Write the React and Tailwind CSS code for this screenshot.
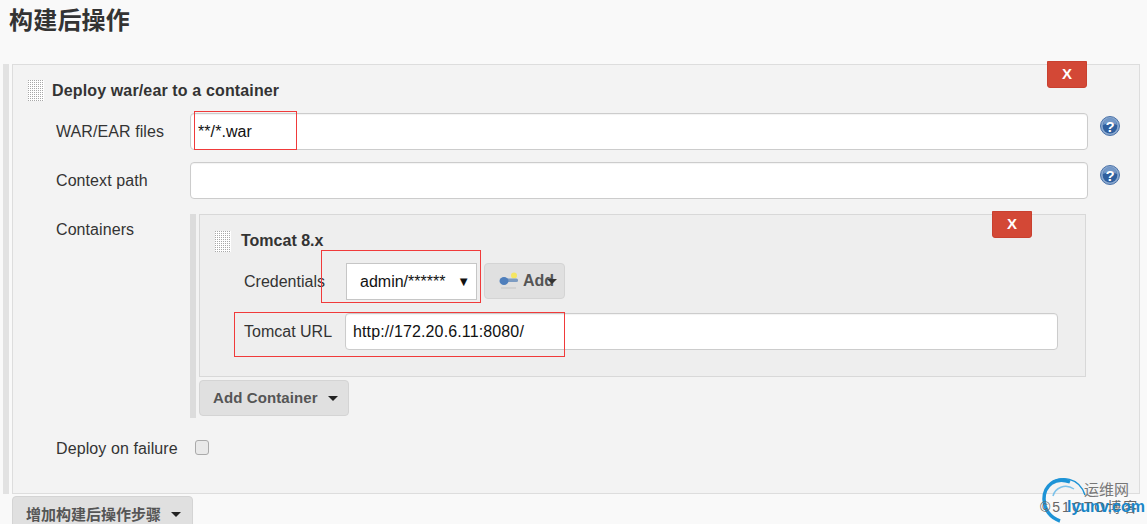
const Grip = ({ id }) => (
  <svg width="16" height="21" className="shrink-0 bg-white">
    <defs>
      <pattern id={id} width="2" height="2" patternUnits="userSpaceOnUse">
        <rect width="1" height="1" fill="#a8a8a8" />
      </pattern>
    </defs>
    <rect width="16" height="21" fill={`url(#${id})`} />
  </svg>
);

const HelpIcon = () => (
  <svg width="20" height="20" viewBox="0 0 20 20" className="shrink-0">
    <circle cx="10" cy="10" r="9.5" fill="#8aa8cf" stroke="#4a72a8" />
    <circle cx="10" cy="10" r="7.4" fill="#2f5f9e" />
    <path d="M3 9a7 7 0 0 1 14 0a9 5 0 0 0-14 0z" fill="#7398c7" />
    <text x="10" y="15.5" textAnchor="middle" fontSize="15" fontWeight="700" fontFamily="Liberation Sans" fill="#fff">?</text>
  </svg>
);

const KeyIcon = () => (
  <svg width="20" height="20" viewBox="0 0 20 20" className="shrink-0">
    <circle cx="15" cy="4.5" r="3" fill="#f5e663" />
    <rect x="6" y="7.5" width="13" height="3.5" rx="1.5" fill="#7d9cc2" />
    <ellipse cx="5" cy="10" rx="4.5" ry="4" fill="#4f7fbc" />
    <rect x="2" y="16" width="15" height="2" fill="#d2d2d2" />
  </svg>
);

const Caret = ({ className }) => (
  <span className={`inline-block h-0 w-0 border-x-[5px] border-t-[5px] border-x-transparent ${className}`} />
);

const DeleteButton = ({ className }) => (
  <button className={`absolute z-10 flex h-[27px] w-10 items-center justify-center rounded-b-[3px] border border-[#c9402f] bg-[#d34836] text-[15px] font-bold text-white ${className}`}>
    X
  </button>
);

const TextField = ({ value, className }) => (
  <input
    readOnly
    defaultValue={value}
    className={`rounded-[4px] border border-[#ccc] bg-white px-[7px] text-[16px] text-[#111] shadow-[inset_0_1px_1px_rgba(0,0,0,0.05)] outline-none ${className}`}
  />
);

const RedBox = ({ className }) => (
  <div className={`pointer-events-none absolute z-20 border border-[#f03a3a] ${className}`} />
);

export default function App() {
  return (
    <div className="relative h-[524px] w-[1147px] overflow-hidden bg-[#f9f9f9] font-['Liberation_Sans','Noto_Sans_CJK_SC',sans-serif] text-[16px] text-[#333]">
      <h1 className="h-[64px] pl-[9px] pt-[4px] text-[24px] leading-[34px] font-bold tracking-[0.2px]">构建后操作</h1>

      <div className="flex gap-[3px] pl-[3px]">
        <div className="w-[6px] bg-[#e2e2e2]" />
        <div className="h-[430px] w-[1128px] border border-[#ddd] bg-[#f3f3f3]">
          <div className="flex h-[48px] items-center gap-2 pl-[15px] pt-[3px]">
            <Grip id="grip-outer" />
            <span className="font-bold tracking-[0.14px]">Deploy war/ear to a container</span>
          </div>

          <div className="flex flex-col gap-3 pl-[43px] tracking-[0.08px]">
            <div className="flex items-center">
              <label className="w-[134px] shrink-0">WAR/EAR files</label>
              <TextField value="**/*.war" className="h-[37px] w-[898px]" />
              <div className="mb-[12px] ml-3"><HelpIcon /></div>
            </div>
            <div className="flex items-center">
              <label className="w-[134px] shrink-0">Context path</label>
              <TextField value="" className="h-[37px] w-[898px]" />
              <div className="mb-[12px] ml-3"><HelpIcon /></div>
            </div>
          </div>

          <div className="mt-[15px] flex pl-[43px]">
            <label className="w-[134px] shrink-0 pt-[4px] tracking-[0.08px]">Containers</label>
            <div className="w-[6px] bg-[#dcdcdc]" />
            <div className="ml-[3px] flex w-[887px] flex-col items-start pb-[2px]">
              <div className="h-[163px] w-full border border-[#d8d8d8] bg-[#eee]">
                <div className="flex h-[48px] items-center gap-[10px] pl-[15px] pt-[4px]">
                  <Grip id="grip-inner" />
                  <span className="font-bold">Tomcat 8.x</span>
                </div>
                <div className="flex h-[37px] items-center pl-[44px]">
                  <label className="w-[102px] shrink-0">Credentials</label>
                  <div className="flex h-[37px] w-[131px] items-center justify-between border border-[#c6c6c6] bg-white pl-[13px] pr-[6px] text-[#111]">
                    <span>admin/******</span>
                    <span className="text-[13px]">▼</span>
                  </div>
                  <button className="mb-[1px] ml-[7px] flex h-[36px] w-[81px] items-center rounded-[4px] border border-[#d4d4d4] bg-[#e0e0e0] pl-[14px] font-bold text-[#555]">
                    <KeyIcon />
                    <span className="ml-[4px]">Add</span>
                    <Caret className="-ml-[7px] border-t-[#333]" />
                  </button>
                </div>
                <div className="mt-[13px] flex items-center pl-[44px]">
                  <label className="w-[101px] shrink-0">Tomcat URL</label>
                  <TextField value="http://172.20.6.11:8080/" className="h-[37px] w-[713px] tracking-[0.13px]" />
                </div>
              </div>
              <button className="mt-[3px] flex h-[36px] w-[150px] items-center gap-[10px] rounded-[4px] border border-[#d4d4d4] bg-[#e0e0e0] pl-[13px] text-[15px] font-bold tracking-[0.1px] text-[#555]">
                Add Container
                <Caret className="border-t-[#222]" />
              </button>
            </div>
          </div>

          <div className="mt-[21px] flex h-5 items-center pl-[43px]">
            <label className="w-[139px] shrink-0 tracking-[0.1px]">Deploy on failure</label>
            <input type="checkbox" readOnly className="mb-[4px] h-[15px] w-[14px] appearance-none rounded-[3px] border border-[#aaa] bg-[#e9e9e9]" />
          </div>
        </div>
      </div>

      <div className="ml-3 mt-[2px] flex h-[40px] w-[181px] items-start gap-[10px] rounded-t-[4px] border border-[#d4d4d4] bg-[#e0e0e0] pl-[13px] pt-[7px] text-[15px] font-bold text-[#555]">
        增加构建后操作步骤
        <Caret className="mt-[8px] border-t-[#222]" />
      </div>

      <DeleteButton className="left-[1047px] top-[61px]" />
      <DeleteButton className="left-[992px] top-[211px]" />

      <RedBox className="left-[194px] top-[111px] h-[39px] w-[103px]" />
      <RedBox className="left-[321px] top-[250px] h-[53px] w-[160px]" />
      <RedBox className="left-[234px] top-[312px] h-[45px] w-[331px]" />

      <div className="pointer-events-none absolute left-[1040px] top-[475px] z-30 h-[49px] w-[107px]">
        <svg width="50" height="49" viewBox="0 0 50 49" className="absolute left-0 top-0">
          <path d="M30 7C15 1 4 11 4 24c0 11 7 19 16 22" fill="none" stroke="#1d93d6" strokeWidth="3.5" />
          <path d="M10 9c11-9 29-7 35 11" fill="none" stroke="#1d93d6" strokeWidth="1.5" />
          <path d="M13 21c2-8 12-13 21-7" fill="none" stroke="#7cc2ea" strokeWidth="1.5" />
        </svg>
        <span className="absolute left-[44px] top-[6px] text-[15px] leading-[18px] text-[#777]">运维网</span>
        <span className="absolute left-0 top-[23px] whitespace-nowrap text-[14px] leading-[18px] tracking-[2px] text-[#666]">©51CTO博客</span>
        <span className="absolute left-[27px] top-[22px] whitespace-nowrap text-[16px] leading-[20px] font-bold text-[#1a86c8]">lyunv.com</span>
      </div>
    </div>
  );
}
